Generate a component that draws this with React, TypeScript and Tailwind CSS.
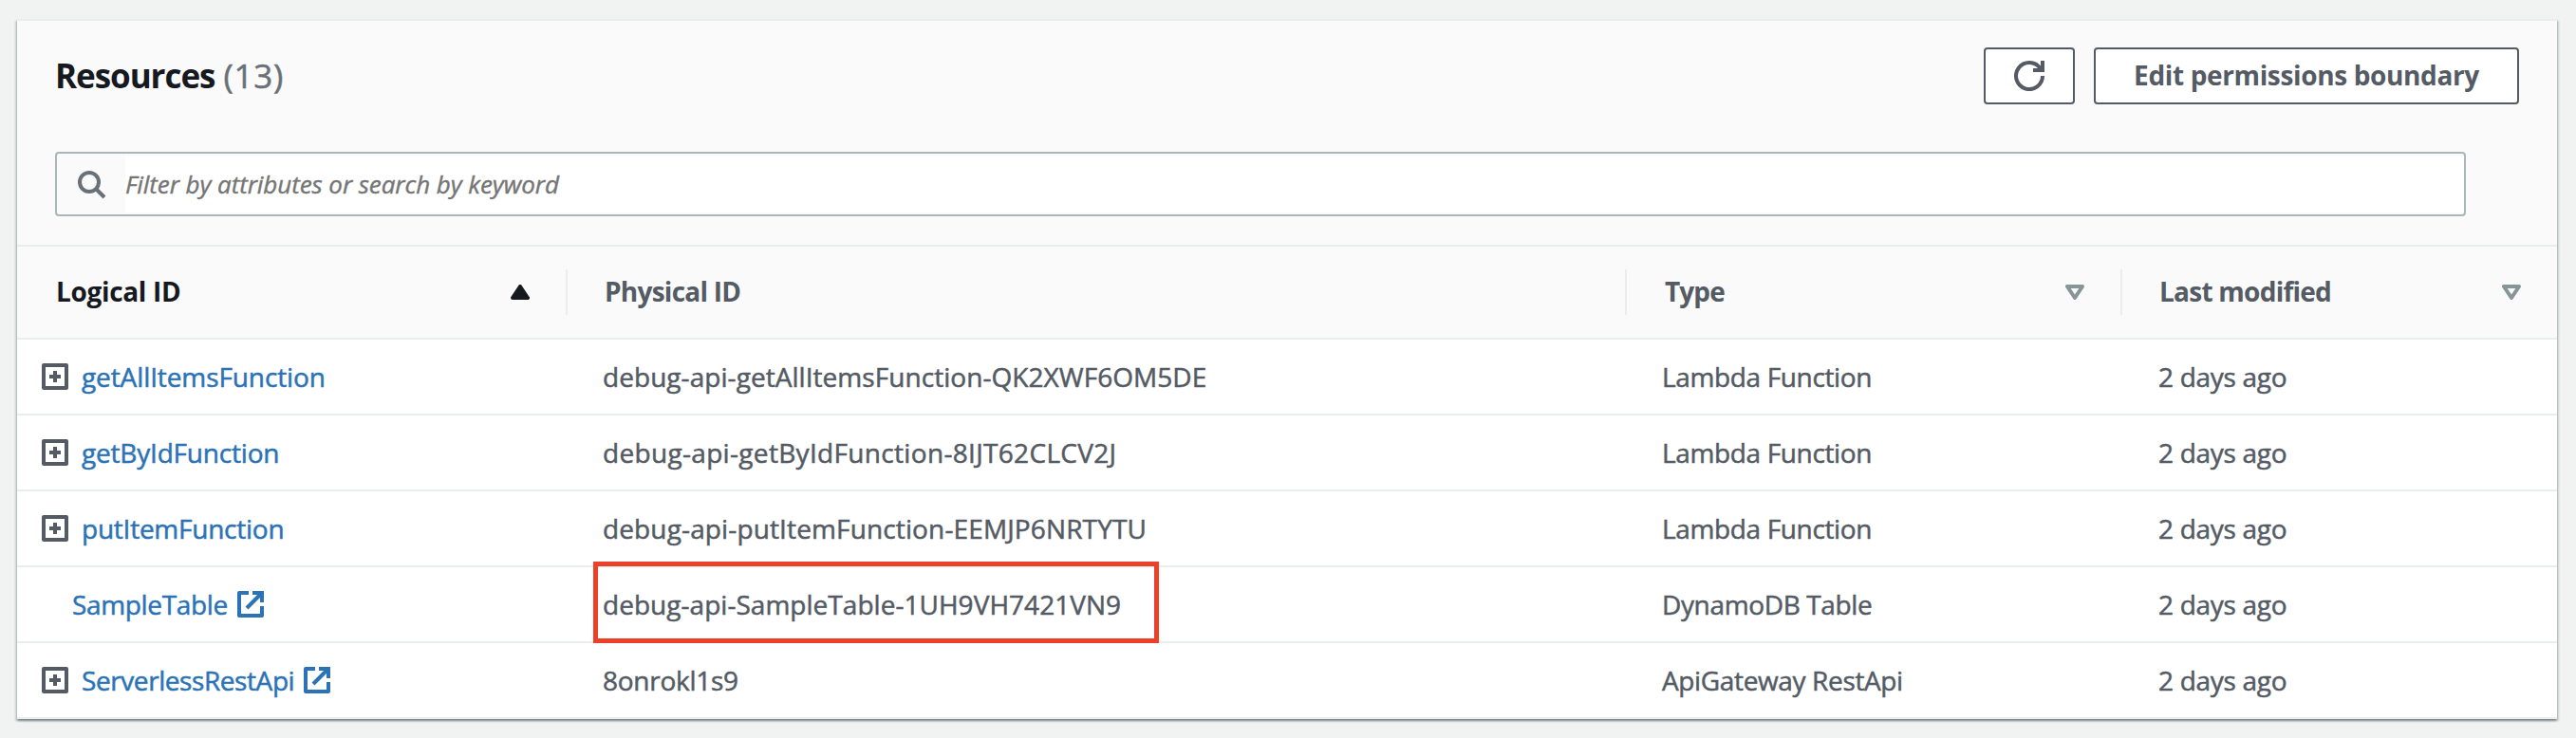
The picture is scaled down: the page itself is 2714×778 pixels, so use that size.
import React from "react";

const rows = [
  { name: "getAllItemsFunction", track: "tracking-[-0.1px]", expand: true, ext: false, id: "debug-api-getAllItemsFunction-QK2XWF6OM5DE", idTrack: "tracking-[0.05px]", type: "Lambda Function", mark: false },
  { name: "getByIdFunction", track: "tracking-[-0.2px]", expand: true, ext: false, id: "debug-api-getByIdFunction-8IJT62CLCV2J", idTrack: "tracking-[0.32px]", type: "Lambda Function", mark: false },
  { name: "putItemFunction", track: "tracking-[-0.24px]", expand: true, ext: false, id: "debug-api-putItemFunction-EEMJP6NRTYTU", idTrack: "tracking-[0.13px]", type: "Lambda Function", mark: false },
  { name: "SampleTable", track: "tracking-[-0.35px]", expand: false, ext: true, id: "debug-api-SampleTable-1UH9VH7421VN9", idTrack: "tracking-[0.03px]", type: "DynamoDB Table", mark: true },
  { name: "ServerlessRestApi", track: "tracking-[-0.42px]", expand: true, ext: true, id: "8onrokl1s9", idTrack: "tracking-[-0.27px]", type: "ApiGateway RestApi", mark: false },
];

function Refresh() {
  return (
    <svg className="size-8" viewBox="0 0 32 32" fill="none" stroke="currentColor" strokeWidth="4">
      <path d="M30 16A14 14 0 1 1 27.6 8.2" />
      <path d="M20 10h10V0" />
    </svg>
  );
}

function Search() {
  return (
    <svg className="size-8 shrink-0" viewBox="0 0 32 32" fill="none" stroke="currentColor" strokeWidth="4">
      <circle cx="14" cy="14" r="10" />
      <path d="M21 21l9 9" />
    </svg>
  );
}

function Plus() {
  return (
    <svg className="size-7 shrink-0 text-[#545b64]" viewBox="0 0 28 28" fill="none" stroke="currentColor" strokeWidth="4" strokeLinejoin="round">
      <rect x="2" y="2" width="24" height="24" />
      <path d="M14 8v12M8 14h12" />
    </svg>
  );
}

function External() {
  return (
    <svg className="size-7 shrink-0" viewBox="0 0 28 28" fill="none" stroke="currentColor" strokeWidth="4">
      <path d="M12 2H2v24h24V16" strokeLinejoin="round" />
      <path d="M16 2h10v10" />
      <path d="M26 2L10 18" />
    </svg>
  );
}

function SortUp() {
  return (
    <svg className="h-4 w-5" viewBox="0 0 20 16" fill="currentColor" stroke="currentColor" strokeWidth="4" strokeLinejoin="round">
      <path d="M10 2l8 12H2z" />
    </svg>
  );
}

function SortDown() {
  return (
    <svg className="h-4 w-5 text-[#879596]" viewBox="0 0 20 16" fill="none" stroke="currentColor" strokeWidth="4" strokeLinejoin="round">
      <path d="M2 2h16l-8 12z" />
    </svg>
  );
}

export default function App() {
  return (
    <div className="h-[778px] w-[2714px] overflow-hidden bg-[#f1f3f3] pt-5 pr-5 pl-[18px] font-['Open_Sans',sans-serif] text-[28px] leading-[40px] text-[#545b64]">
      <section className="border-t-2 border-[#eaeded] bg-white shadow-[0_2px_2px_0_rgba(0,28,36,0.3),2px_2px_2px_0_rgba(0,28,36,0.15),-2px_2px_2px_0_rgba(0,28,36,0.15)]">
        <div className="h-[238px] border-b-2 border-[#eaeded] bg-[#fafafa] px-10 pt-7">
          <header className="flex h-[60px] items-center justify-between">
            <h2 className="flex gap-[9px] text-[35px]">
              <span className="font-bold tracking-[-1.05px] text-[#16191f]">Resources</span>
              <span className="tracking-[0.8px] text-[#687078] [-webkit-text-stroke:0.5px_currentColor]">(13)</span>
            </h2>
            <div className="flex gap-5">
              <button className="flex h-[60px] w-24 items-center justify-center rounded-[4px] border-2 border-[#545b64] bg-white">
                <Refresh />
              </button>
              <button className="h-[60px] w-[448px] rounded-[4px] border-2 border-[#545b64] bg-white pb-[2px] font-bold tracking-[-0.36px]">
                Edit permissions boundary
              </button>
            </div>
          </header>
          <div className="mt-[50px] flex h-[68px] w-[2540px] rounded-[4px] border-2 border-[#aab7b8] py-[2px]">
            <div className="w-[72px] pt-[14px] pl-5 text-[#687078]">
              <Search />
            </div>
            <div className="flex flex-1 items-center bg-white text-[26px] tracking-[-0.08px] text-[#757575] italic [-webkit-text-stroke:0.4px_currentColor]">
              Filter by attributes or search by keyword
            </div>
          </div>
        </div>
        <div className="grid h-[98px] grid-cols-[580px_1116px_522px_458px] items-center border-b-2 border-[#eaeded] bg-[#fafafa] font-bold">
          <div className="flex h-12 items-center justify-between border-r-2 border-[#eaeded] pr-[38px] pl-[41px] text-[#16191f]">
            <span className="pb-[2px] tracking-[-0.33px]">Logical ID</span>
            <SortUp />
          </div>
          <div className="flex h-12 items-center border-r-2 border-[#eaeded] pl-[39px]">
            <span className="pb-[2px] tracking-[-0.75px]">Physical ID</span>
          </div>
          <div className="flex h-12 items-center justify-between border-r-2 border-[#eaeded] pr-[38px] pl-10">
            <span className="pb-[2px] tracking-[-0.9px]">Type</span>
            <SortDown />
          </div>
          <div className="flex h-12 items-center justify-between pr-[38px] pl-[39px]">
            <span className="pb-[2px] tracking-[-0.75px]">Last modified</span>
            <SortDown />
          </div>
        </div>
        {rows.map((r) => (
          <div
            key={r.name}
            className="grid h-20 grid-cols-[580px_1116px_522px_458px] items-center border-b-2 border-[#eaeded] [-webkit-text-stroke:0.5px_currentColor]"
          >
            <div className={r.expand ? "flex items-center gap-[14px] pl-[26px]" : "flex items-center pl-[58px]"}>
              {r.expand && <Plus />}
              <span className="flex items-center gap-[10px] text-[#2b73b6]">
                <a className={r.track}>{r.name}</a>
                {r.ext && <External />}
              </span>
            </div>
            <div className="relative pl-[37px]">
              <span className={r.idTrack}>{r.id}</span>
              {r.mark && <div className="absolute -top-[25px] left-[27px] h-[86px] w-[596px] border-[5px] border-[#ec4128]" />}
            </div>
            <div className="pl-[37px] tracking-[-0.36px]">{r.type}</div>
            <div className="pl-[38px] tracking-[-0.3px]">2 days ago</div>
          </div>
        ))}
      </section>
    </div>
  );
}
